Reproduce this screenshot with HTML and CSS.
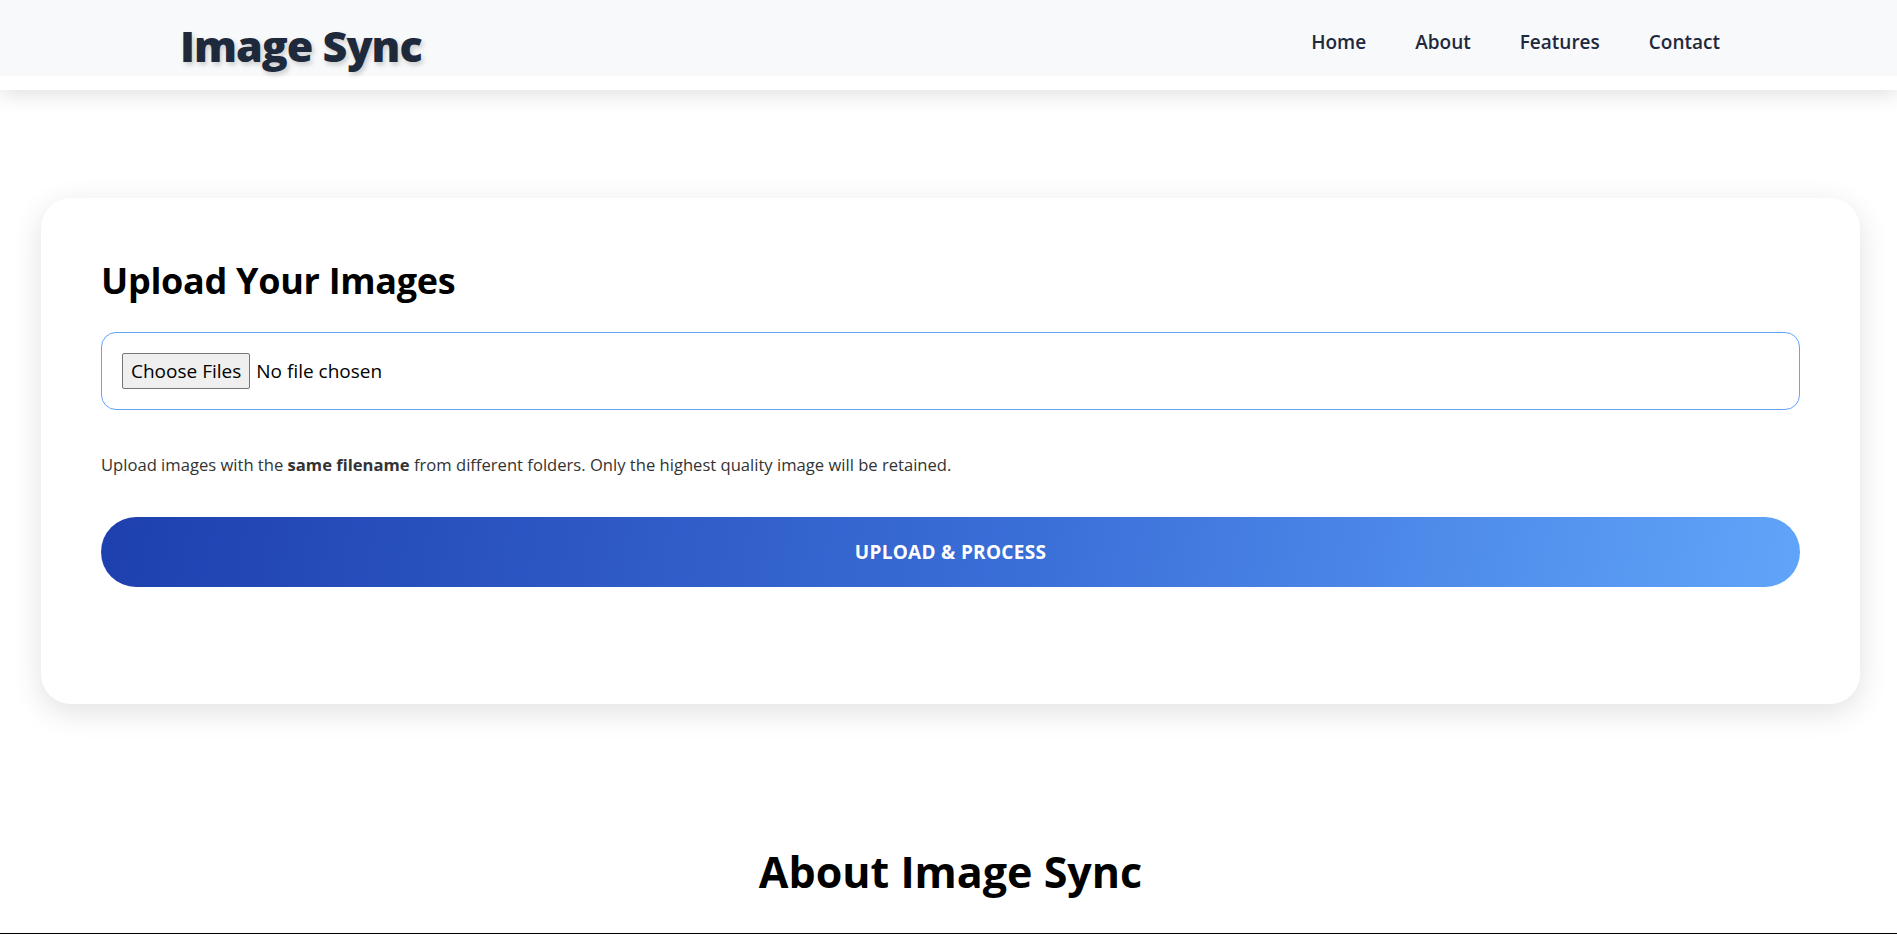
FILE: index.html
```html
<!DOCTYPE html>
<html lang="en">
<head>
<meta charset="utf-8">
<title>Image Sync</title>
<link rel="stylesheet" href="styles.css">
</head>
<body>
<header class="site-header">
  <div class="header-inner">
    <div class="logo">Image Sync</div>
    <nav class="nav">
      <a class="nav-link" href="#">Home</a>
      <a class="nav-link" href="#">About</a>
      <a class="nav-link" href="#">Features</a>
      <a class="nav-link" href="#">Contact</a>
    </nav>
  </div>
</header>
<main class="main">
  <section class="upload-card">
    <h2 class="upload-title">Upload Your Images</h2>
    <div class="file-box">
      <input class="file-input" type="file" multiple>
    </div>
    <p class="hint">Upload images with the <strong>same filename</strong> from different folders. Only the highest quality image will be retained.</p>
    <button class="upload-btn" type="button">Upload &amp; Process</button>
  </section>
  <section class="about">
    <h2 class="about-title">About Image Sync</h2>
  </section>
</main>
<div class="divider"></div>
</body>
</html>
```
FILE: styles.css
```css
* { box-sizing: border-box; }

html, body {
  margin: 0;
  padding: 0;
  background: #ffffff;
  font-family: "Open Sans", "Noto Sans", sans-serif;
  color: #000;
}

.site-header {
  background: #ffffff;
  padding-bottom: 14px;
  box-shadow: 0 4px 20px rgba(0, 0, 0, 0.13);
  position: relative;
  z-index: 2;
}

.header-inner {
  height: 76px;
  background: #f8f9fb;
  display: flex;
  align-items: center;
  justify-content: space-between;
  padding: 0 177px 0 180px;
}

.logo {
  font-size: 43px;
  font-weight: 800;
  color: #1e293b;
  letter-spacing: -1px;
  text-shadow: 2px 3px 5px rgba(0, 0, 0, 0.18);
  padding-top: 16px;
  line-height: 60px;
}

.nav {
  display: flex;
  gap: 49px;
  padding-top: 7px;
}

.nav-link {
  font-size: 19px;
  font-weight: 600;
  color: #1e293b;
  text-decoration: none;
}

.main {
  padding: 108px 37px 0 41px;
}

.upload-card {
  background: #ffffff;
  border-radius: 30px;
  box-shadow: 0 8px 30px rgba(0, 0, 0, 0.12);
  padding: 60px 60px 117px;
}

.upload-title {
  margin: 0 0 27px;
  font-size: 36px;
  font-weight: 700;
  letter-spacing: -0.3px;
  line-height: 1.3;
}

.file-box {
  border: 1px solid #60a5fa;
  border-radius: 15px;
  padding: 20px;
  height: 78px;
  display: flex;
  align-items: center;
}

.file-input {
  font-family: "Open Sans", "Noto Sans", sans-serif;
  font-size: 19px;
  color: #000;
}

.file-input::file-selector-button {
  font-family: inherit;
  font-size: 19px;
  height: 36px;
  padding: 0 8px;
  margin-right: 6px;
  background: #efefef;
  border: 1px solid #767676;
  border-radius: 2px;
  color: #000;
}

.hint {
  margin: 43px 0 41px;
  font-size: 16.6px;
  color: #333333;
}

.upload-btn {
  display: block;
  width: 100%;
  height: 70px;
  border: none;
  border-radius: 35px;
  background: linear-gradient(100deg, #1e40af 0%, #3b6fd8 55%, #60a5fa 100%);
  color: #ffffff;
  font-family: inherit;
  font-size: 19px;
  font-weight: 700;
  text-transform: uppercase;
  letter-spacing: 0.3px;
}

.about {
  padding-top: 140px;
  text-align: center;
}

.about-title {
  margin: 0;
  font-size: 43px;
  font-weight: 700;
  line-height: 1.3;
}

.divider {
  margin-top: 33px;
  border-top: 1px solid #000;
}
```
